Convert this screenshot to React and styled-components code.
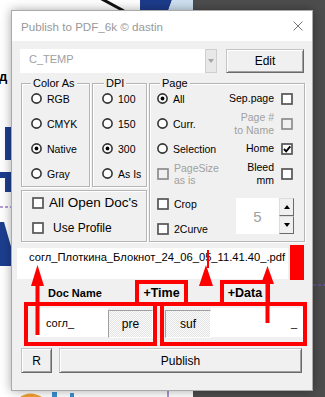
import React from 'react';
import styled, { createGlobalStyle } from 'styled-components';

const GlobalStyle = createGlobalStyle`
  * { box-sizing: border-box; }
  html, body { margin: 0; padding: 0; background: #fff; }
  body { font-family: "Liberation Sans", Arial, sans-serif; color: #000; }
`;

const Desktop = styled.div`
  position: relative;
  width: 325px;
  height: 397px;
  overflow: hidden;
  background: linear-gradient(to right, #fff 0, #fff 193px, #4d4d4d 193px);
`;

const Backdrop = styled.svg`
  position: absolute;
  left: 0;
  top: 0;
`;

const Marks = styled.svg`
  position: absolute;
  left: 0;
  top: 0;
  pointer-events: none;
`;

const Window = styled.div`
  position: absolute;
  left: 11px;
  top: 10px;
  width: 302px;
  height: 381px;
  display: flex;
  flex-direction: column;
  background: #f0f0f0;
  border: 1px solid #aaaaaa;
  box-shadow: 0 0 10px rgba(0, 0, 0, 0.35);
`;

const TitleBar = styled.div`
  flex: none;
  height: 30px;
  display: flex;
  align-items: center;
  justify-content: space-between;
  padding: 0 9px;
  background: #fff;
  color: #999;
  font-size: 11.6px;
`;

const Client = styled.div`
  display: flex;
  flex-direction: column;
  padding: 8px 8px 0 8px;
`;

const TopRow = styled.div`
  display: flex;
  gap: 9px;
  height: 24px;
`;

const Combo = styled.div`
  width: 197px;
  display: flex;
  background: #fff;
`;

const ComboText = styled.div`
  flex: 1;
  padding-left: 9px;
  color: #a0a0a0;
  font-size: 11px;
  line-height: 21px;
`;

const ComboArrow = styled.div`
  width: 12px;
  display: flex;
  align-items: center;
  justify-content: center;
  background: #e8e8e8;
  border: 1px solid #cfcfcf;
  &::after {
    content: '';
    border-left: 3.5px solid transparent;
    border-right: 3.5px solid transparent;
    border-top: 4px solid #a6a6a6;
  }
`;

const Button = styled.button`
  width: ${p => p.$w}px;
  height: ${p => p.$h || 25}px;
  margin: 0;
  padding: 0;
  font-family: inherit;
  font-size: 12px;
  color: #000;
  background: #f0f0f0;
  border: 1px solid;
  border-color: #c4c4c4 #6a6a6a #6a6a6a #c4c4c4;
  box-shadow: inset 1px 1px #fff, inset -1px -1px #a0a0a0;
`;

const FlatButton = styled.button`
  width: ${p => p.$w}px;
  height: 28px;
  margin: 2px 0 0 0;
  padding: 0;
  font-family: inherit;
  font-size: 12px;
  color: #000;
  background-color: #f6f6f6;
  background-image: repeating-conic-gradient(#e4e4e4 0 25%, #fbfbfb 0 50%);
  background-size: 2px 2px;
  border: 1px solid;
  border-color: #a0a0a0 #fff #fff #a0a0a0;
`;

const GroupsArea = styled.div`
  display: grid;
  grid-template-columns: 126px 156px;
  column-gap: 2px;
  margin: 4px 0 0 1px;
`;

const LeftCol = styled.div`
  display: flex;
  flex-direction: column;
`;

const GroupPair = styled.div`
  display: flex;
  gap: 2px;
`;

const Group = styled.div`
  width: ${p => (p.$w ? `${p.$w}px` : 'auto')};
  margin-top: ${p => p.$mt}px;
  border: 1px solid #b5b5b5;
  box-shadow: inset 1px 1px #fff, 1px 1px #fff;
  display: flex;
  flex-direction: column;
`;

const GroupLabel = styled.div`
  width: fit-content;
  height: 12px;
  margin: -7px 0 -3px ${p => p.$ml}px;
  padding: 0 2px;
  background: #f0f0f0;
  font-size: 11px;
  line-height: 12px;
`;

const Option = styled.div`
  display: flex;
  align-items: center;
  gap: ${p => p.$gap || 5}px;
  height: ${p => p.$h || 25}px;
  padding-left: ${p => p.$pl || 0}px;
  font-size: ${p => p.$fs || 10.5}px;
  color: ${p => (p.$off ? '#a0a0a0' : '#000')};
  line-height: 12px;
  white-space: nowrap;
`;

const PageGrid = styled.div`
  display: grid;
  grid-template-columns: 1fr auto;
  grid-auto-rows: 25px;
  padding: 0 11px 0 7px;
`;

const RightCell = styled.div`
  display: flex;
  align-items: center;
  justify-content: flex-end;
  gap: 7px;
  text-align: right;
  font-size: 10.5px;
  line-height: 12.5px;
  color: ${p => (p.$off ? '#a0a0a0' : '#000')};
`;

const PageBottom = styled.div`
  display: flex;
  align-items: center;
  justify-content: space-between;
  height: 50px;
  margin-top: 5px;
  padding: 0 10px 0 7px;
`;

const Stack = styled.div`
  display: flex;
  flex-direction: column;
`;

const Spin = styled.div`
  display: flex;
  height: 36px;
`;

const SpinField = styled.div`
  width: 43px;
  display: flex;
  align-items: center;
  justify-content: center;
  background: #fff;
  color: #a0a0a0;
  font-size: 15px;
`;

const SpinButtons = styled.div`
  width: 15px;
  display: flex;
  flex-direction: column;
`;

const SpinBtn = styled.div`
  flex: 1;
  display: flex;
  align-items: center;
  justify-content: center;
  background: #f0f0f0;
  border: 1px solid;
  border-color: #dcdcdc #6a6a6a #6a6a6a #dcdcdc;
  &::after {
    content: '';
    border-left: 3.5px solid transparent;
    border-right: 3.5px solid transparent;
    ${p => (p.$down ? 'border-top: 4px solid #000;' : 'border-bottom: 4px solid #000;')}
  }
`;

const FileRow = styled.div`
  display: flex;
  align-items: flex-start;
  gap: 2px;
  margin: 3px 0 0 -3px;
  height: 35px;
`;

const FileBox = styled.div`
  width: 273px;
  height: 31px;
  margin-top: 3px;
  padding: 2px 0 0 12px;
  background: #fff;
  font-size: 11.2px;
  line-height: 14px;
  white-space: nowrap;
  overflow: hidden;
`;

const RedMark = styled.div`
  width: 14px;
  height: 35px;
  background: #ff0000;
`;

const LabelRow = styled.div`
  position: relative;
  z-index: 1;
  display: flex;
  align-items: center;
  height: 26px;
  margin-bottom: -4px;
  padding-left: 28px;
`;

const DocName = styled.div`
  width: 87px;
  font-size: 11px;
  font-weight: bold;
`;

const Tag = styled.div`
  width: ${p => p.$w}px;
  height: 26px;
  margin-left: ${p => p.$ml || 0}px;
  display: flex;
  align-items: center;
  justify-content: center;
  border: 4px solid #ff0000;
  font-size: 12.5px;
  font-weight: bold;
`;

const BoxesRow = styled.div`
  display: grid;
  grid-template-columns: 133px 147px;
  column-gap: 3px;
  height: 44px;
  margin-left: 4px;
`;

const RedBox = styled.div`
  display: flex;
  align-items: flex-start;
  padding: 2px 0 0 ${p => p.$pl}px;
  border: 4px solid #ff0000;
`;

const Field = styled.div`
  width: ${p => (p.$w ? `${p.$w}px` : 'auto')};
  flex: ${p => (p.$w ? 'none' : 1)};
  height: 29px;
  display: flex;
  align-items: center;
  justify-content: ${p => (p.$right ? 'flex-end' : 'flex-start')};
  padding: 0 6px 0 10px;
  background: #fff;
  font-size: 11px;
`;

const BottomRow = styled.div`
  display: flex;
  gap: 7px;
  margin: 2px 0 0 1px;
`;

const Radio = ({ on }) => (
  <svg width="11" height="11" viewBox="0 0 11 11">
    <circle cx="5.5" cy="5.5" r="4.6" fill="#fff" stroke="#333" strokeWidth="1.6" />
    {on && <circle cx="5.5" cy="5.5" r="1.9" fill="#000" />}
  </svg>
);

const Check = ({ on, off }) => (
  <svg width="12" height="12" viewBox="0 0 12 12">
    <rect x="1" y="1" width="10" height="10" fill={off ? '#f0f0f0' : '#fff'} stroke={off ? '#8c8c8c' : '#555'} strokeWidth="1.7" />
    {on && <path d="M3 6 L5.2 8.4 L9.3 3.4" fill="none" stroke="#000" strokeWidth="1.9" />}
  </svg>
);

const Close = () => (
  <svg width="10" height="10" viewBox="0 0 10 10">
    <path d="M0.5 0.5 L9.5 9.5 M9.5 0.5 L0.5 9.5" stroke="#777" strokeWidth="1" />
  </svg>
);

export default function App() {
  return (
    <Desktop>
      <GlobalStyle />
      <Backdrop width="325" height="397" viewBox="0 0 325 397">
        <path d="M100 -2 L124 11" stroke="#111" strokeWidth="3" />
        <polygon points="140,0 172,0 168,11 140,11" fill="#1c3c8c" />
        <polygon points="172,0 193,0 193,11 168,11" fill="#cfe0f0" />
        <text x="-1" y="81" fontSize="13" fontWeight="bold" fontFamily="Liberation Sans, sans-serif">д</text>
        <rect x="5" y="127" width="7" height="33" fill="#1d3e8f" />
        <rect x="0" y="172" width="12" height="6" fill="#1d3e8f" />
        <rect x="5" y="172" width="7" height="20" fill="#1d3e8f" />
        <path d="M0 207 H12" stroke="#6a3db0" strokeWidth="1" strokeDasharray="3 2" />
        <polygon points="0,222 4,222 12,250 12,266 0,266" fill="#1d3e8f" />
        <path d="M313 285 H325" stroke="#7a55d0" strokeWidth="1" strokeDasharray="3 2" />
        <path d="M20 397 Q30 390 42 397" fill="#f0a030" />
        <rect x="52" y="392" width="5" height="5" fill="#3a8fd0" />
        <rect x="70" y="393" width="4" height="4" fill="#3a8fd0" />
        <path d="M168 391 V397" stroke="#5030a0" strokeWidth="1" />
      </Backdrop>

      <Window>
        <TitleBar>
          <span>Publish to PDF_6k © dastin</span>
          <Close />
        </TitleBar>

        <Client>
          <TopRow>
            <Combo>
              <ComboText>C_TEMP</ComboText>
              <ComboArrow />
            </Combo>
            <Button $w={78} $h={24}>Edit</Button>
          </TopRow>

          <GroupsArea>
            <LeftCol>
              <GroupPair>
                <Group $w={69} $mt={6}>
                  <GroupLabel $ml={9}>Color As</GroupLabel>
                  <Option $pl={9}><Radio />RGB</Option>
                  <Option $pl={9}><Radio />CMYK</Option>
                  <Option $pl={9}><Radio on />Native</Option>
                  <Option $pl={9}><Radio />Gray</Option>
                </Group>
                <Group $w={55} $mt={6}>
                  <GroupLabel $ml={11}>DPI</GroupLabel>
                  <Option $pl={9}><Radio />100</Option>
                  <Option $pl={9}><Radio />150</Option>
                  <Option $pl={9}><Radio on />300</Option>
                  <Option $pl={9}><Radio />As Is</Option>
                </Group>
              </GroupPair>
              <Group $mt={3}>
                <Option $pl={10} $h={23} $fs={13.5} $gap={5}><Check />All Open Doc's</Option>
                <Option $pl={10} $h={27} $fs={12} $gap={9}><Check />Use Profile</Option>
              </Group>
            </LeftCol>

            <Group $mt={6}>
              <GroupLabel $ml={10}>Page</GroupLabel>
              <PageGrid>
                <Option><Radio on />All</Option>
                <RightCell>Sep.page<Check /></RightCell>
                <Option><Radio />Curr.</Option>
                <RightCell $off>Page #<br />to Name<Check off /></RightCell>
                <Option><Radio />Selection</Option>
                <RightCell>Home<Check on /></RightCell>
                <Option $off><Check off /><span>PageSize<br />as is</span></Option>
                <RightCell>Bleed<br />mm<Check /></RightCell>
              </PageGrid>
              <PageBottom>
                <Stack>
                  <Option><Check />Crop</Option>
                  <Option><Check />2Curve</Option>
                </Stack>
                <Spin>
                  <SpinField>5</SpinField>
                  <SpinButtons>
                    <SpinBtn />
                    <SpinBtn $down />
                  </SpinButtons>
                </Spin>
              </PageBottom>
            </Group>
          </GroupsArea>

          <FileRow>
            <FileBox>согл_Плоткина_Блокнот_24_06_05_11.41.40_.pdf</FileBox>
            <RedMark />
          </FileRow>

          <LabelRow>
            <DocName>Doc Name</DocName>
            <Tag $w={53}>+Time</Tag>
            <Tag $w={50} $ml={32}>+Data</Tag>
          </LabelRow>

          <BoxesRow>
            <RedBox $pl={8}>
              <Field $w={72}>согл_</Field>
              <FlatButton $w={45}>pre</FlatButton>
            </RedBox>
            <RedBox $pl={1}>
              <FlatButton $w={46}>suf</FlatButton>
              <Field $right>_</Field>
            </RedBox>
          </BoxesRow>

          <BottomRow>
            <Button $w={31}>R</Button>
            <Button $w={243}>Publish</Button>
          </BottomRow>
        </Client>
      </Window>

      <Marks width="325" height="397" viewBox="0 0 325 397">
        <rect x="35.5" y="284" width="4" height="51" fill="#ff0000" />
        <polygon points="37.5,265 31,286 44,286" fill="#ff0000" />
        <rect x="207" y="250" width="2" height="18" fill="#ff0000" />
        <polygon points="206,265 199,286 213,286" fill="#ff0000" />
        <rect x="265.5" y="283" width="4" height="40" fill="#ff0000" />
        <polygon points="267.5,266 261,284 274,284" fill="#ff0000" />
      </Marks>
    </Desktop>
  );
}
